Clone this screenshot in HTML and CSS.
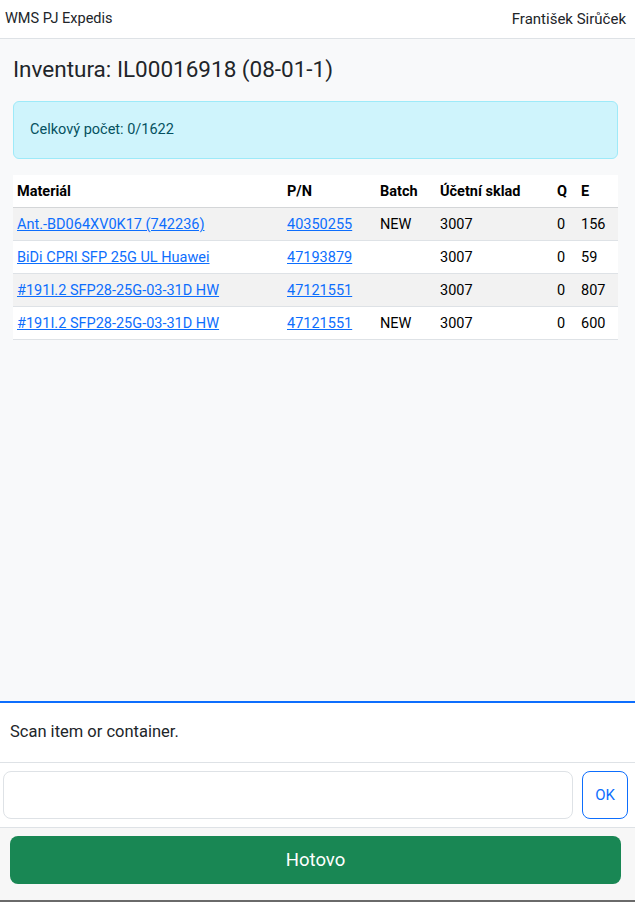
FILE: index.html
```html
<!DOCTYPE html>
<html lang="cs">
<head>
<meta charset="utf-8">
<title>WMS PJ Expedis</title>
<link rel="stylesheet" href="styles.css">
</head>
<body>
<header class="navbar">
  <span class="brand">WMS PJ Expedis</span>
  <span class="user">František Sirůček</span>
</header>
<main class="content">
  <h4 class="title">Inventura: IL00016918 (08-01-1)</h4>
  <div class="alert">Celkový počet: 0/1622</div>
  <table class="items">
    <colgroup>
      <col class="c-mat"><col class="c-pn"><col class="c-batch"><col class="c-sklad"><col class="c-q"><col class="c-e">
    </colgroup>
    <thead>
      <tr><th>Materiál</th><th>P/N</th><th>Batch</th><th>Účetní sklad</th><th>Q</th><th>E</th></tr>
    </thead>
    <tbody>
      <tr class="odd"><td><a href="#">Ant.-BD064XV0K17 (742236)</a></td><td><a href="#">40350255</a></td><td>NEW</td><td>3007</td><td>0</td><td>156</td></tr>
      <tr><td><a href="#">BiDi CPRI SFP 25G UL Huawei</a></td><td><a href="#">47193879</a></td><td></td><td>3007</td><td>0</td><td>59</td></tr>
      <tr class="odd"><td><a href="#">#191I.2 SFP28-25G-03-31D HW</a></td><td><a href="#">47121551</a></td><td></td><td>3007</td><td>0</td><td>807</td></tr>
      <tr><td><a href="#">#191I.2 SFP28-25G-03-31D HW</a></td><td><a href="#">47121551</a></td><td>NEW</td><td>3007</td><td>0</td><td>600</td></tr>
    </tbody>
  </table>
</main>
<footer class="scan-panel">
  <div class="prompt">Scan item or container.</div>
  <div class="scan-row">
    <input class="scan-input" type="text">
    <button class="btn-ok" type="button">OK</button>
  </div>
  <div class="done-row">
    <button class="btn-done" type="button">Hotovo</button>
  </div>
</footer>
</body>
</html>
```
FILE: styles.css
```css
* { box-sizing: border-box; }
html, body { height: 100%; }
body {
  margin: 0;
  background: #f8f9fa;
  color: #212529;
  font-family: Roboto, "Liberation Sans", sans-serif;
  font-size: 14.5px;
  line-height: 24px;
  display: flex;
  flex-direction: column;
}
.navbar {
  height: 39px;
  background: #fff;
  border-bottom: 1px solid #dee2e6;
  display: flex;
  align-items: center;
  justify-content: space-between;
  padding: 0 9px 0 5px;
  font-size: 14.5px;
}
.user { font-size: 15px; }
.content {
  flex: 1;
  padding: 17px 17px 0 13px;
}
.title {
  margin: 0 0 18px;
  font-size: 22.5px;
  line-height: 27px;
  font-weight: 400;
}
.alert {
  background: #cff4fc;
  border: 1px solid #9eeaf9;
  border-radius: 6px;
  color: #055160;
  padding: 16px 16px;
  margin-bottom: 16px;
}
.items {
  width: 605px;
  border-collapse: collapse;
  background: #fff;
  table-layout: fixed;
}
.c-mat { width: 270px; }
.c-pn { width: 93px; }
.c-batch { width: 60px; }
.c-sklad { width: 117px; }
.c-q { width: 24px; }
.c-e { width: 41px; }
.items th, .items td {
  text-align: left;
  padding: 5px 4px 3px;
  border-bottom: 1px solid #dee2e6;
  white-space: nowrap;
  color: #000;
}
.items th { font-weight: 700; border-bottom-color: #d4d6d8; }
.items tr.odd td { background: #f2f2f2; }
.items a { color: #0d6efd; text-decoration: underline; }
.scan-panel {
  background: #f7f7f7;
  border-top: 2px solid #0d6efd;
  border-bottom: 2px solid #6a6a6a;
}
.prompt {
  background: #fff;
  height: 60px;
  border-bottom: 1px solid #dee2e6;
  padding: 17px 10px 0;
  font-size: 16.5px;
  color: #212529;
}
.scan-row {
  background: #fff;
  display: flex;
  gap: 9px;
  padding: 8px 7px 8px 3px;
  border-bottom: 1px solid #dee2e6;
}
.scan-input {
  flex: 1;
  height: 48px;
  border: 1px solid #dee2e6;
  border-radius: 8px;
  background: #fff;
  font-family: inherit;
  font-size: 18px;
}
.btn-ok {
  width: 46px;
  height: 48px;
  border: 1px solid #0d6efd;
  border-radius: 8px;
  background: #fff;
  color: #0d6efd;
  font-family: inherit;
  font-size: 15px;
  padding: 0;
}
.done-row {
  padding: 8px 14px 16px 10px;
}
.btn-done {
  display: block;
  width: 100%;
  height: 48px;
  border: 0;
  border-radius: 8px;
  background: #198754;
  color: #fff;
  font-family: inherit;
  font-size: 18.5px;
  font-weight: 400;
}
```
